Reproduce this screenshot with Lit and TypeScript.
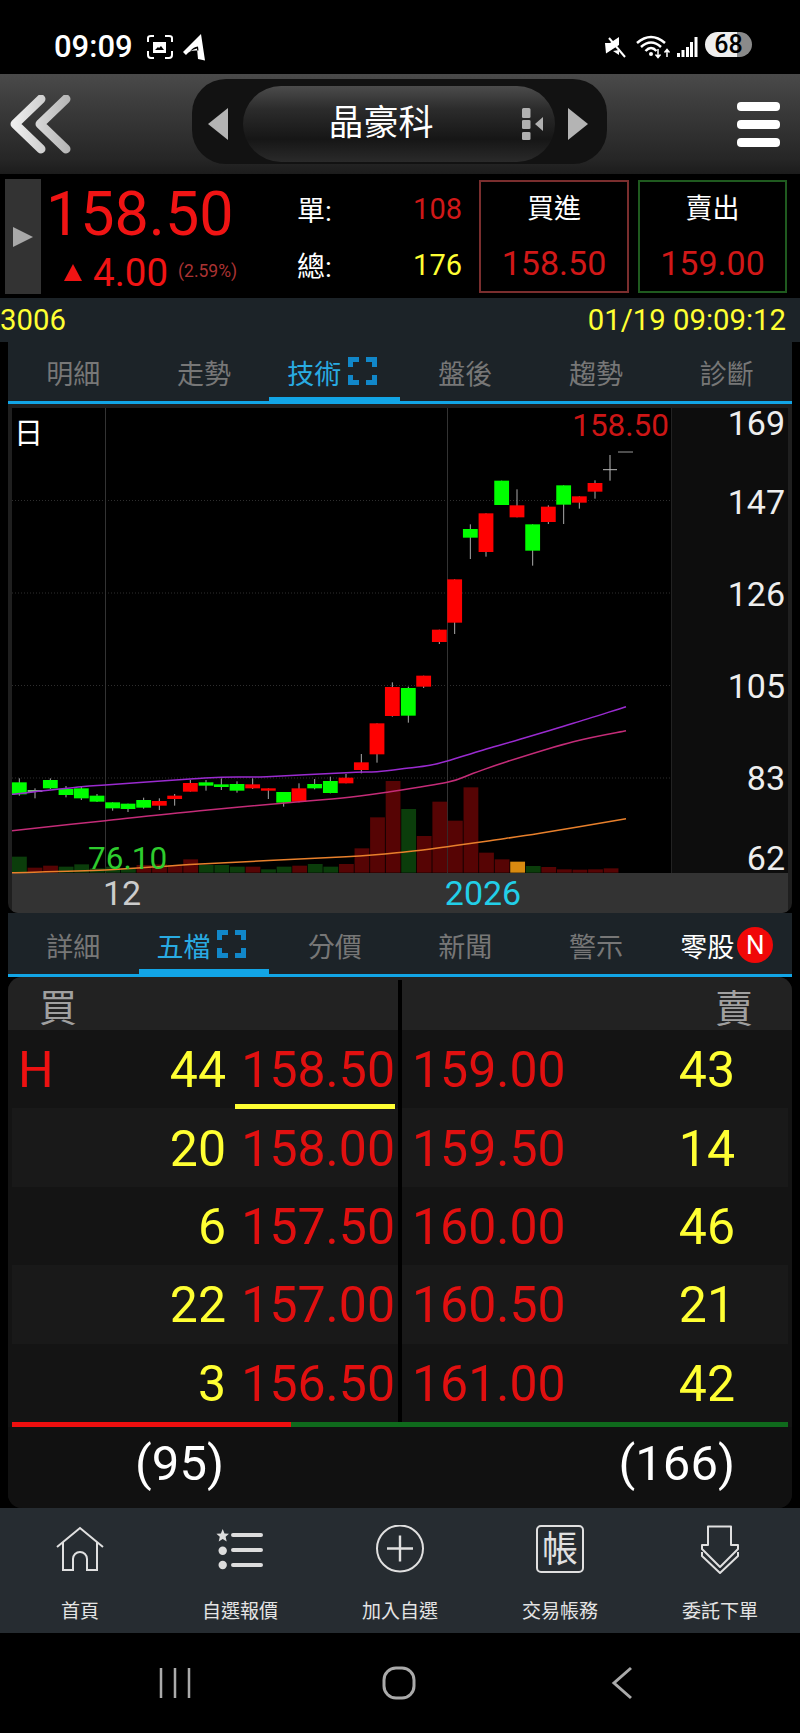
import { LitElement, html, css, svg } from "lit";
import { customElement } from "lit/decorators.js";

// candle: centre x, body top, body bottom, wick top, wick bottom, colour (reference 3x coords)
const G = "#0f0", R = "#f00";
const candles: [number, number, number, number, number, string][] = [
  [58, 1147, 1183, 1135, 1187, G], [105, 1170, 1176, 1165, 1195, "#7db87d"], [151, 1140, 1165, 1135, 1167, G],
  [198, 1167, 1185, 1158, 1192, G], [244, 1165, 1195, 1158, 1200, G], [291, 1187, 1205, 1182, 1206, G],
  [338, 1207, 1225, 1207, 1232, G], [384, 1211, 1227, 1211, 1236, G], [431, 1200, 1223, 1193, 1226, G],
  [478, 1203, 1217, 1195, 1230, R], [524, 1187, 1197, 1182, 1217, R], [571, 1149, 1175, 1140, 1175, R],
  [618, 1147, 1157, 1140, 1172, G], [664, 1153, 1161, 1135, 1170, G], [711, 1152, 1172, 1144, 1178, G],
  [758, 1153, 1165, 1135, 1167, R], [805, 1165, 1172, 1165, 1197, R], [851, 1176, 1208, 1176, 1220, G],
  [897, 1165, 1205, 1150, 1207, R], [944, 1152, 1165, 1137, 1168, G], [991, 1143, 1179, 1130, 1180, G],
  [1038, 1133, 1150, 1122, 1150, R], [1084, 1087, 1110, 1062, 1120, R], [1131, 970, 1063, 970, 1088, R],
  [1177, 861, 948, 847, 950, R], [1225, 864, 947, 860, 968, G], [1271, 827, 860, 827, 864, R],
  [1318, 689, 726, 689, 732, R], [1364, 538, 668, 538, 702, R], [1411, 387, 413, 373, 477, G],
  [1458, 340, 456, 340, 470, R], [1505, 242, 315, 242, 315, G], [1551, 316, 352, 268, 352, R],
  [1598, 373, 452, 373, 497, G], [1645, 320, 366, 316, 372, R], [1691, 256, 314, 256, 372, G],
  [1738, 289, 308, 289, 326, R], [1785, 249, 275, 241, 296, R],
];
const DG = "#0b3d0b", DR = "#560404";
const volumes: [number, string][] = [
  [1370, DG], [1403, DR], [1397, DR], [1400, DG], [1393, DG], [1405, DG], [1400, DG], [1405, DG], [1395, DR], [1393, DR],
  [1395, DR], [1378, DR], [1395, DG], [1395, DG], [1400, DG], [1400, DR], [1408, DG], [1400, DG], [1397, DR], [1392, DG],
  [1400, DG], [1392, DR], [1345, DR], [1252, DR], [1143, DR], [1227, DG], [1308, DR], [1205, DR], [1262, DR], [1162, DR],
  [1358, DR], [1378, DR], [1385, "#d88a10"], [1398, DG], [1401, DR], [1408, DR], [1409, DR], [1408, DR], [1405, DR],
];
const purple = "36,1183 105,1175 244,1160 316,1155 430,1147 570,1137 664,1132 800,1130 1038,1118 1131,1115 1220,1105 1290,1096 1342,1083 1450,1050 1560,1018 1720,970 1878,920";
const pink = "36,1292 316,1262 600,1232 897,1205 1020,1195 1150,1178 1342,1147 1420,1120 1520,1085 1720,1025 1878,992";
const orange = "36,1418 316,1410 600,1392 1038,1370 1220,1355 1342,1340 1470,1322 1620,1300 1878,1256";

// smooth curve through the points, scaled from reference 3x coords to page px
const curve = (s: string) => {
  const p = s.split(" ").map((q) => {
    const [a, b] = q.split(",").map(Number);
    return [a / 3, 400 + b / 3];
  });
  let d = `M${p[0][0].toFixed(1)} ${p[0][1].toFixed(1)}`;
  for (let i = 0; i < p.length - 1; i++) {
    const a = p[Math.max(i - 1, 0)], b = p[i], c = p[i + 1], e = p[Math.min(i + 2, p.length - 1)];
    const c1 = [b[0] + (c[0] - a[0]) / 6, b[1] + (c[1] - a[1]) / 6];
    const c2 = [c[0] - (e[0] - b[0]) / 6, c[1] - (e[1] - b[1]) / 6];
    d += `C${c1[0].toFixed(1)} ${c1[1].toFixed(1)} ${c2[0].toFixed(1)} ${c2[1].toFixed(1)} ${c[0].toFixed(1)} ${c[1].toFixed(1)}`;
  }
  return d;
};
const Y = (v: number) => 400 + v / 3;

const axis: [string, number][] = [["169", 423], ["147", 502], ["126", 594], ["105", 686], ["83", 778], ["62", 858]];
const book = [
  ["44", "158.50", "159.00", "43"],
  ["20", "158.00", "159.50", "14"],
  ["6", "157.50", "160.00", "46"],
  ["22", "157.00", "160.50", "21"],
  ["3", "156.50", "161.00", "42"],
];

const expandIcon = html`<svg class="expand" width="29" height="28" viewBox="0 0 29 28"><path d="M11 2.500H2.500V10M18 2.500H26.500V10M2.500 18V25.500H11M26.500 18V25.500H18" fill="none" stroke="#1187c9" stroke-width="5"/></svg>`;

@customElement("app-root")
export class AppRoot extends LitElement {
  static styles = css`
    :host { display: block; width: 800px; height: 1733px; background: #000; color: #fff; font-family: Roboto, "Noto Sans CJK TC", sans-serif; overflow: hidden; }
    .status { height: 74px; box-sizing: border-box; padding: 21px 0 0 54px; display: flex; align-items: flex-start; }
    .time { font-size: 31px; font-weight: 500; line-height: 52px; height: 52px; width: 90px; margin-top: 0; flex: none; }
    .spacer { flex: 1; }
    .status svg { flex: none; }
    .batt { width: 47px; height: 25px; margin: 11px 48px 0 0; border-radius: 13px; background: linear-gradient(90deg, #eee 68%, #8a8a8a 68%); color: #000; font-size: 25px; font-weight: 500; line-height: 25px; text-align: center; }
    .header { height: 100px; background: linear-gradient(#4a4a4a, #3a3a3a 35%, #262626 85%, #1c1c1c); display: grid; grid-template-columns: 192px 415px 1fr; }
    .header svg { display: block; }
    .back { padding: 20px 0 0 8px; }
    .pill { margin-top: 5px; height: 85px; background: #121212; border-radius: 34px; display: grid; grid-template-columns: 51px 312px 1fr; align-items: center; justify-items: center; }
    .pill > svg { margin-top: 4px; }
    .pill > svg:last-child { margin-right: 6px; }
    .inner { position: relative; width: 312px; height: 76px; margin-top: 5px; box-sizing: border-box; border-radius: 38px; background: linear-gradient(#4c4c4c, #2c2c2c 30%, #161616 70%, #2a2a2a); display: flex; align-items: center; justify-content: center; font-size: 35px; line-height: 76px; }
    .inner .title { margin-right: 36px; }
    .inner svg { position: absolute; left: 279px; top: 22px; }
    .burger { display: flex; flex-direction: column; gap: 9px; align-items: flex-end; padding: 28px 20px 0 0; }
    .burger i { display: block; width: 43px; height: 9px; background: #fff; border-radius: 4px; }
    .quote { height: 124px; display: flex; background: #000; }
    .handle { width: 36px; height: 115px; margin: 5px 0 0 5px; background: #333; display: flex; align-items: center; justify-content: center; }
    .pbox { width: 252px; padding-left: 5px; }
    .big { height: 80px; line-height: 80px; font-size: 61px; color: #f01414; }
    .chg { height: 36px; display: flex; align-items: center; padding-left: 18px; color: #f01414; }
    .chg b { font-weight: 400; font-size: 38.500px; margin-left: 11px; }
    .chg small { font-size: 17.500px; color: #a33; margin-left: 10px; margin-top: -3px; }
    .stats { width: 164px; padding-top: 7px; }
    .stat { height: 56px; display: flex; justify-content: space-between; align-items: center; font-size: 29px; }
    .stat span:first-child { font-size: 28px; margin-left: -1px; }
    .red { color: #d01818; }
    .yel { color: #ffff33; }
    .ob { width: 150px; height: 113px; margin: 6px 0 0 17px; box-sizing: border-box; border: 2px solid #7a2e2e; display: flex; flex-direction: column; align-items: center; }
    .ob.sell { margin-left: 9px; width: 149px; border-color: #1f5a1f; }
    .ob span { height: 54px; line-height: 54px; font-size: 27px; }
    .ob em { height: 54px; line-height: 54px; font-style: normal; font-size: 34px; color: #d01818; }
    .info { height: 44px; background: #1c2328; display: flex; justify-content: space-between; align-items: center; font-size: 29.300px; color: #ffff33; padding-right: 14px; box-sizing: border-box; }
    .tabs { margin: 0 8px; background: #1c2328; border-bottom: 3px solid #12a5e6; display: grid; grid-template-columns: repeat(6, 1fr); }
    .tab { height: 59px; box-sizing: border-box; padding-top: 5px; border-bottom: 4px solid transparent; display: flex; align-items: center; justify-content: center; gap: 7px; font-size: 27px; color: #777; }
    .tabs.second .tab { height: 61px; padding-top: 8px; border-bottom-width: 5px; }
    .tab.on { color: #29abe2; border-bottom-color: #12a5e6; padding-right: 5px; }
    .tab.white { color: #fff; gap: 3px; padding-left: 0; }
    .tab .expand { margin-top: -2px; }
    .n { width: 36px; height: 36px; border-radius: 50%; background: #f00808; color: #fff; display: flex; align-items: center; justify-content: center; font-size: 26px; margin-top: 0; }
    .chart { margin: 0 8px; height: 509px; border-radius: 0 0 10px 10px; overflow: hidden; background: #1f1f1f; }
    .chart svg { display: block; }
    .chart text { font-family: Roboto, "Noto Sans CJK TC", sans-serif; }
    .book { margin: 0 8px; height: 531px; background: #141414; border-radius: 14px; overflow: hidden; display: flex; flex-direction: column; }
    .bhead { height: 53px; background: #222; display: flex; font-size: 38px; color: #a0a0a0; flex: none; }
    .half { width: 390px; box-sizing: border-box; display: flex; align-items: center; flex: none; position: relative; }
    .half.s { flex: 1; width: auto; border-left: 4px solid #000; }
    .bhead .half { padding-left: 31px; padding-top: 2px; }
    .bhead .half.s { margin-top: 3px; padding: 0 39px 0 0; justify-content: flex-end; }
    .row { height: 78.400px; margin: 0 4px; display: flex; font-size: 50px; background: #191919; flex: none; }
    .row:nth-child(even) { background: #141414; }
    .row .half { width: 386px; padding: 2px 0 0 6px; }
    .row .half.s { width: auto; padding-left: 10px; }
    .h { width: 60px; color: #ee1111; }
    .q { flex: 1; text-align: right; color: #ffff33; }
    .p { width: 172px; padding-right: 3px; box-sizing: border-box; text-align: right; color: #e01010; }
    .half.s .p { width: auto; text-align: left; padding: 0; }
    .half.s .q { padding-right: 53px; }
    .under { position: absolute; left: 223px; width: 160px; top: 74px; height: 5px; background: #ffff33; }
    .bar { height: 5px; margin: 0 4px; display: flex; flex: none; }
    .bar i { display: block; background: #0f6a1c; flex: 1; }
    .bar i:first-child { background: #ee0f0f; flex: none; width: 279px; }
    .sum { flex: 1; display: flex; font-size: 49px; background: #111; align-items: center; }
    .sum span { text-align: right; flex: none; margin-top: -7px; }
    .sum span:first-child { width: 216px; }
    .sum span:last-child { width: 511px; }
    .nav { height: 125px; background: #262c31; display: grid; grid-template-columns: repeat(5, 1fr); }
    .item { display: flex; flex-direction: column; align-items: center; padding-top: 17px; }
    .item svg { display: block; }
    .item span { margin-top: 18px; height: 37px; line-height: 37px; font-size: 19px; color: #e4e4e4; }
    .item text { font-family: Roboto, "Noto Sans CJK TC", sans-serif; }
    .sys { height: 100px; padding: 33px 0 0 159px; display: flex; gap: 191px; box-sizing: border-box; }
    .sys svg { display: block; }
    .sys svg:last-child { margin-left: 4px; }
  `;

  private tabs(items: string[], active: number, second = false, extra?: unknown) {
    return html`<div class="tabs ${second ? "second" : ""}">
      ${items.map((t, i) => html`<div class="tab ${i === active ? "on" : ""}">${t}${i === active ? expandIcon : ""}</div>`)}
      ${extra}
    </div>`;
  }

  private chart() {
    return html`<div class="chart"><svg width="784" height="509" viewBox="8 404 784 509">
      <rect x="12" y="408" width="659" height="465" fill="#000"/>
      <rect x="671" y="408" width="117" height="465" fill="#0d0d0d"/>
      <rect x="671" y="408" width="1" height="465" fill="#222"/>
      <rect x="12" y="873" width="776" height="40" fill="#333"/>
      ${[500.5, 593, 685.5, 778].map((y) => svg`<line x1="12" x2="671" y1=${y} y2=${y} stroke="#2e2e2e" stroke-dasharray="1 2"/>`)}
      ${[105.5, 447.5].map((x) => svg`<line x1=${x} x2=${x} y1="408" y2="873" stroke="#333"/>`)}
      ${volumes.map(([t, c], i) => svg`<rect x=${12 + i * 15.57} y=${Y(t)} width="14.8" height=${Y(1418) - Y(t)} fill=${c}/>`)}
      ${candles.map(([x, t, b, wt, wb, c]) => svg`
        <line x1=${x / 3} x2=${x / 3} y1=${Y(wt)} y2=${Y(wb)} stroke="#aaa"/>
        <rect x=${x / 3 - 7.4} y=${Y(t)} width="14.8" height=${(b - t) / 3} fill=${c}/>`)}
      <line x1="603" x2="617" y1="469.7" y2="469.7" stroke="#bbb"/>
      <line x1="610" x2="610" y1="455" y2="480.7" stroke="#bbb"/>
      <line x1="618" x2="633" y1="452" y2="452" stroke="#999"/>
      <path d=${curve(purple)} fill="none" stroke="#9a2bd0" stroke-width="1.5"/>
      <path d=${curve(pink)} fill="none" stroke="#c42c78" stroke-width="1.5"/>
      <path d=${curve(orange)} fill="none" stroke="#e8802c" stroke-width="1.5"/>
      <text x="14" y="444" font-size="29" fill="#fff">日</text>
      <text x="669" y="435.5" font-size="31.5" fill="#cc1616" text-anchor="end">158.50</text>
      ${axis.map(([t, y]) => svg`<text x="785" y=${y + 12} font-size="34" fill="#eee" text-anchor="end">${t}</text>`)}
      <text x="88" y="869" font-size="31.5" fill="#2ecc2e">76.10</text>
      <text x="122" y="905" font-size="34" fill="#ccc" text-anchor="middle">12</text>
      <text x="483" y="905" font-size="34" fill="#22cfe8" text-anchor="middle">2026</text>
    </svg></div>`;
  }

  render() {
    return html`
      <div class="status">
        <div class="time">09:09</div>
        <svg width="62" height="45" viewBox="144 21 62 45">
          <path d="M148 42V38Q148 36 151 36H154M165 36H169Q172 36 172 38V42M148 51V55Q148 58 151 58H154M165 58H169Q172 58 172 55V51" fill="none" stroke="#fff" stroke-width="2"/>
          <path fill="#fff" fill-rule="evenodd" d="M153 42H166V53H153ZM155 50H164L161 46L159 48L158 47Z"/>
          <path fill="#fff" fill-rule="evenodd" d="M201 34L183 52L186 55Q190 50 197 48.500L198 59L205 60.500ZM190 51.500Q193 47 198 46.500L198.500 50.500Q193 50 190 51.500Z"/>
        </svg>
        <div class="spacer"></div>
        <svg width="102" height="45" viewBox="603 21 102 45">
          <path fill="#fff" d="M605 43H610L619 37V45L606 53.500Z"/>
          <path fill="#fff" d="M619 50V55L613 51Z"/>
          <line x1="609" y1="38" x2="625" y2="57" stroke="#fff" stroke-width="2"/>
          <path d="M637 43Q651 31 665 43M641 47Q651 38 661 47M645.500 51Q651 45 656.500 51" fill="none" stroke="#fff" stroke-width="2.500"/>
          <circle cx="651" cy="54" r="2" fill="#fff"/>
          <path d="M658 49V57M655.500 54.500L658 57.500L660.500 54.500M667 57V50M664.500 52.500L667 49.500L669.500 52.500" fill="none" stroke="#fff" stroke-width="1.500"/>
          <path fill="#fff" d="M677 53h3v4h-3zM681.500 50h3v7h-3zM686 47h3v10h-3zM690 42h3v15h-3zM694.500 37h3v20h-3z"/>
        </svg>
        <div class="batt">68</div>
      </div>

      <div class="header">
        <div class="back">
          <svg width="64" height="64" viewBox="8 95 64 64" style="margin-top:1px">
            <defs><linearGradient id="cg" gradientUnits="userSpaceOnUse" x1="14" y1="0" x2="70" y2="0"><stop offset="0" stop-color="#eee"/><stop offset="1" stop-color="#b5b5b5"/></linearGradient></defs>
            <path d="M41 99L15 124L41 149M66 99L40 124L66 149" fill="none" stroke="url(#cg)" stroke-width="9" stroke-linecap="round" stroke-linejoin="round"/>
          </svg>
        </div>
        <div class="pill">
          <svg width="20" height="32"><polygon points="20,0 0,16 20,32" fill="#b4b4b4"/></svg>
          <div class="inner">
            <span class="title">晶豪科</span>
            <svg width="24" height="32" viewBox="0 0 24 32"><path fill="#b0b0b0" d="M0 1.500Q0 0 1.500 0H7Q8.500 0 8.500 1.500V9Q8.500 10 7 10H1.500Q0 10 0 9ZM0 13Q0 12 1.500 12H7Q8.500 12 8.500 13V20Q8.500 21 7 21H1.500Q0 21 0 20ZM0 25Q0 24 1.500 24H7Q8.500 24 8.500 25V31Q8.500 32 7 32H1.500Q0 32 0 31ZM21 9V23L13 16Z"/></svg>
          </div>
          <svg width="20" height="32"><polygon points="0,0 20,16 0,32" fill="#b4b4b4"/></svg>
        </div>
        <div class="burger"><i></i><i></i><i></i></div>
      </div>

      <div class="quote">
        <div class="handle"><svg width="20" height="20"><polygon points="0,0 20,10 0,20" fill="#a8a8a8"/></svg></div>
        <div class="pbox">
          <div class="big">158.50</div>
          <div class="chg">
            <svg width="18" height="17"><polygon points="9,0 18,17 0,17" fill="#f01414"/></svg>
            <b>4.00</b><small>(2.59%)</small>
          </div>
        </div>
        <div class="stats">
          <div class="stat"><span>單:</span><span class="red">108</span></div>
          <div class="stat"><span>總:</span><span class="yel">176</span></div>
        </div>
        <div class="ob"><span>買進</span><em>158.50</em></div>
        <div class="ob sell"><span>賣出</span><em>159.00</em></div>
      </div>

      <div class="info"><span>3006</span><span>01/19 09:09:12</span></div>

      ${this.tabs(["明細", "走勢", "技術", "盤後", "趨勢", "診斷"], 2)}
      ${this.chart()}
      ${this.tabs(["詳細", "五檔", "分價", "新聞", "警示"], 1, true, html`<div class="tab white">零股<span class="n">N</span></div>`)}

      <div class="book">
        <div class="bhead"><div class="half">買</div><div class="half s">賣</div></div>
        ${book.map((r, i) => html`<div class="row">
          <div class="half">
            ${i === 0 ? html`<span class="h">H</span>` : ""}
            <span class="q">${r[0]}</span>
            <span class="p">${r[1]}</span>
            ${i === 0 ? html`<div class="under"></div>` : ""}
          </div>
          <div class="half s"><span class="p">${r[2]}</span><span class="q">${r[3]}</span></div>
        </div>`)}
        <div class="bar"><i></i><i></i></div>
        <div class="sum"><span>(95)</span><span>(166)</span></div>
      </div>

      <div class="nav">
        <div class="item">
          <svg width="50" height="50" viewBox="0 0 50 50"><path d="M2 22L25 3L48 22M8 17V45H18V34A7 7 0 0 1 32 34V45H42V17" fill="none" stroke="#e0e0e0" stroke-width="2"/></svg>
          <span>首頁</span>
        </div>
        <div class="item">
          <svg width="50" height="50" viewBox="0 0 50 50">
            <polygon fill="#ddd" points="7.700,4 9.500,8.500 14,8.800 10.600,11.800 11.700,16.500 7.700,14 3.700,16.500 4.800,11.800 1.400,8.800 5.900,8.500"/>
            <circle cx="7.700" cy="25.700" r="4.200" fill="#ddd"/><circle cx="7.700" cy="40" r="4.200" fill="#ddd"/>
            <path d="M18 10H46M18 25H46M18 40H46" stroke="#ddd" stroke-width="4" stroke-linecap="round"/>
          </svg>
          <span>自選報價</span>
        </div>
        <div class="item">
          <svg width="50" height="50" viewBox="0 0 50 50"><circle cx="25" cy="23.500" r="23" fill="none" stroke="#e0e0e0" stroke-width="2"/><path d="M12 23.500H38M25 10.500V36.500" stroke="#e0e0e0" stroke-width="2.400"/></svg>
          <span>加入自選</span>
        </div>
        <div class="item">
          <svg width="50" height="50" viewBox="0 0 50 50"><rect x="2" y="1" width="46" height="46" rx="4" fill="none" stroke="#e0e0e0" stroke-width="2"/><text x="25" y="36.500" text-anchor="middle" font-size="36" fill="#e0e0e0">帳</text></svg>
          <span>交易帳務</span>
        </div>
        <div class="item">
          <svg width="50" height="50" viewBox="0 0 50 50"><path d="M13 1.500H36V20H43V24L25 42L7 24V20H13ZM7 27V31L25 48L43 31V27" fill="none" stroke="#e0e0e0" stroke-width="2" stroke-linejoin="round"/></svg>
          <span>委託下單</span>
        </div>
      </div>

      <div class="sys">
        <svg width="32" height="34" viewBox="0 0 32 34"><path d="M2 2V32M16 2V32M30 2V32" stroke="#aaa" stroke-width="2.500"/></svg>
        <svg width="34" height="34" viewBox="0 0 34 34"><rect x="2" y="2" width="30" height="30" rx="12" fill="none" stroke="#aaa" stroke-width="3"/></svg>
        <svg width="22" height="34" viewBox="0 0 22 34"><path d="M20 2L3 17L20 32" fill="none" stroke="#aaa" stroke-width="3"/></svg>
      </div>
    `;
  }
}
